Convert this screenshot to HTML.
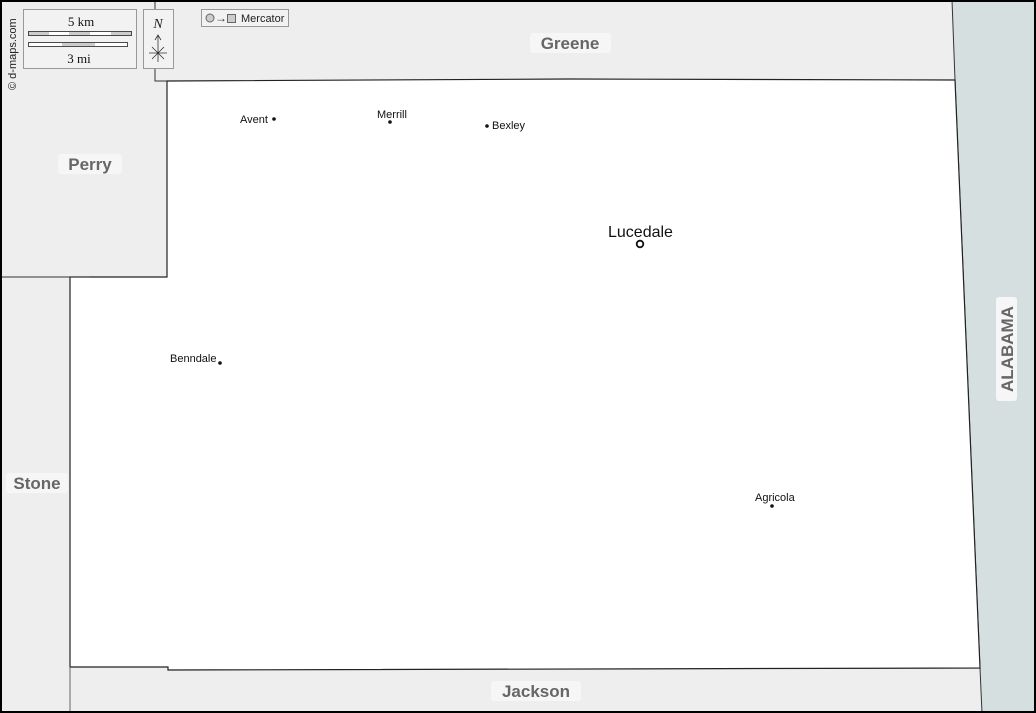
<!DOCTYPE html>
<html><head><meta charset="utf-8"><style>
html,body{margin:0;padding:0;background:#fff}
svg{display:block}
text{font-family:"Liberation Sans",sans-serif}
.lb{font-weight:bold;font-size:17px;fill:#666;text-anchor:middle}
.t{font-size:11px;fill:#111}
</style></head><body>
<svg width="1036" height="713" viewBox="0 0 1036 713" xmlns="http://www.w3.org/2000/svg">
<rect x="0" y="0" width="1036" height="713" fill="#eeeeee"/>
<polygon points="952,0 1036,0 1036,713 982,713 980,668 955,80" fill="#d6dfdf" stroke="#333" stroke-width="1"/>
<polygon points="167,81 570,79 955,80 980,668 168,670 168,667 70,667 70,277 167,277" fill="#fff" stroke="#222" stroke-width="1.2"/>
<polyline points="155,0 155,81 167,81" fill="none" stroke="#333" stroke-width="1"/>
<line x1="0" y1="277" x2="90" y2="277" stroke="#333"/>
<line x1="70" y1="667" x2="70" y2="713" stroke="#666"/>
<rect x="530" y="33" width="81" height="20" rx="3" fill="#f6f6f6"/>
<text class="lb" x="570" y="49">Greene</text>
<rect x="58" y="154" width="64" height="20" rx="3" fill="#f6f6f6"/>
<text class="lb" x="90" y="170">Perry</text>
<rect x="6" y="473" width="62" height="20" rx="3" fill="#f6f6f6"/>
<text class="lb" x="37" y="489">Stone</text>
<rect x="491" y="681" width="90" height="20" rx="3" fill="#f6f6f6"/>
<text class="lb" x="536" y="697">Jackson</text>
<rect x="996" y="297" width="21" height="104" rx="3" fill="#f6f6f6"/>
<text class="lb" transform="translate(1013,349) rotate(-90)" x="0" y="0">ALABAMA</text>
<text class="t" x="240" y="123">Avent</text><circle cx="274" cy="119" r="1.8" fill="#111"/>
<text class="t" x="377" y="118">Merrill</text><circle cx="390" cy="122" r="1.8" fill="#111"/>
<text class="t" x="492" y="129">Bexley</text><circle cx="487" cy="126" r="1.8" fill="#111"/>
<text x="608" y="237" style="font-size:16px;fill:#111">Lucedale</text>
<circle cx="640" cy="244" r="3.3" fill="#fff" stroke="#111" stroke-width="1.8"/>
<text class="t" x="170" y="362">Benndale</text><circle cx="220" cy="363" r="1.8" fill="#111"/>
<text class="t" x="755" y="501">Agricola</text><circle cx="772" cy="506" r="1.8" fill="#111"/>
<rect x="23.5" y="9.5" width="113" height="59" fill="#f2f2f2" stroke="#999"/>
<text x="81" y="26" style="font-family:'Liberation Serif',serif;font-size:13px;text-anchor:middle;fill:#111">5 km</text>
<rect x="28.5" y="31.5" width="103" height="4" fill="#ccc" stroke="#222" stroke-width="0.8"/>
<rect x="49" y="32" width="20" height="3" fill="#fff"/><rect x="90" y="32" width="21" height="3" fill="#fff"/>
<rect x="28.5" y="42.5" width="99" height="4" fill="#fff" stroke="#222" stroke-width="0.8"/>
<rect x="62" y="43" width="33" height="3" fill="#ccc"/>
<text x="79" y="63" style="font-family:'Liberation Serif',serif;font-size:13px;text-anchor:middle;fill:#111">3 mi</text>
<rect x="143.5" y="9.5" width="30" height="59" fill="#f2f2f2" stroke="#999"/>
<text x="158" y="28" style="font-family:'Liberation Serif',serif;font-style:italic;font-size:14px;text-anchor:middle;fill:#222">N</text>
<path d="M158 62V36M155 40L158 35L161 40M149 53H167M152 47L164 59M164 47L152 59" stroke="#333" stroke-width="0.8" fill="none"/>
<rect x="201.5" y="9.5" width="87" height="17" fill="#f2f2f2" stroke="#999"/>
<circle cx="210" cy="18" r="4" fill="#ccc" stroke="#666"/>
<text x="215" y="22" style="font-size:12px;fill:#333">→</text>
<rect x="227.5" y="14.5" width="8" height="8" fill="#ccc" stroke="#666"/>
<text x="241" y="22" style="font-size:11px;fill:#222">Mercator</text>
<text transform="translate(16,90) rotate(-90)" style="font-size:11px;fill:#222">© d-maps.com</text>
<rect x="1" y="1" width="1034" height="711" fill="none" stroke="#000" stroke-width="2"/>
</svg>
</body></html>
